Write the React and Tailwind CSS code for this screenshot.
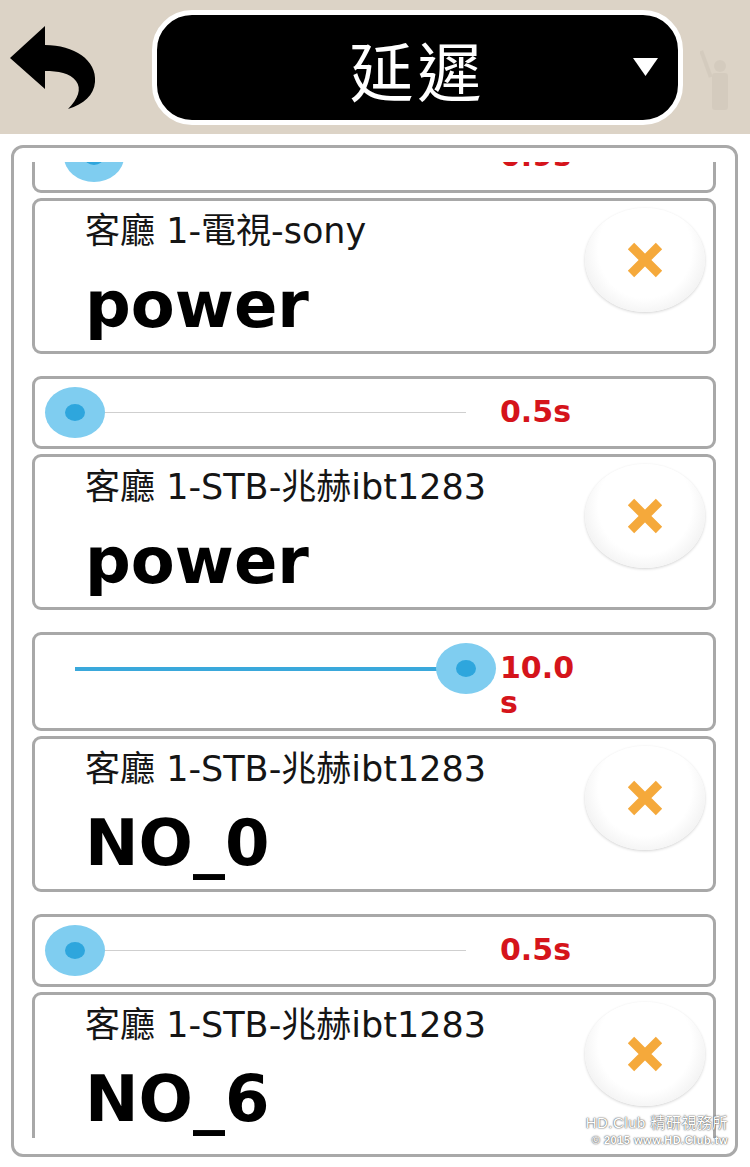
import React from "react";

function BackArrow() {
  return (
    <svg width="100" height="120" viewBox="0 0 100 120" className="block">
      <path
        d="M10 58 L45 26 L45 45 C74 45 97 60 95 82 C94 95 84 104 68 109 C78 99 82 89 76 81 C70 73 58 71 45 71 L45 89 Z"
        fill="#000"
      />
    </svg>
  );
}

function Slider({ thumb, label }) {
  return (
    <div className="border-[3px] border-[#a8a8a8] rounded-[9px] bg-white flex items-start pl-[10px] py-[8px]">
      <div className="relative w-[451px] h-[51px] shrink-0">
        <div className="absolute left-[30px] right-[30px] top-[25px] h-px bg-[#cfcfcf]" />
        <div
          className="absolute left-[30px] top-[24px] h-[4px] bg-[#3aa8db]"
          style={{ width: thumb - 30 }}
        />
        <div
          className="absolute top-0 w-[60px] h-[51px] rounded-[50%] bg-[#7fcdf0] flex items-center justify-center"
          style={{ left: thumb - 30 }}
        >
          <div className="w-[20px] h-[17px] rounded-[50%] bg-[#2ea6dd]" />
        </div>
      </div>
      <div className="ml-[4px] mt-[7px] w-[80px] break-all text-[30px] leading-[35px] font-bold text-[#d5141b] font-['DejaVu_Sans',sans-serif]">
        {label}
      </div>
    </div>
  );
}

function Command({ sub, cmd }) {
  return (
    <div className="border-[3px] border-[#a8a8a8] rounded-[9px] bg-white flex items-start">
      <div className="flex-1 pl-[50px] pt-[10px] pb-[14px]">
        <div className="text-[35px] leading-[40px] text-[#151515] whitespace-nowrap font-['DejaVu_Sans','Noto_Sans_CJK_TC',sans-serif]">
          {sub}
        </div>
        <div className="mt-[22px] text-[64px] leading-[64px] font-bold text-black font-['DejaVu_Sans',sans-serif]">
          {cmd}
        </div>
      </div>
      <div className="mt-[7px] mr-[8px] w-[120px] h-[104px] shrink-0 rounded-[50%] bg-[radial-gradient(ellipse_at_50%_40%,#ffffff_55%,#e4e4e4_100%)] shadow-[0_1px_3px_rgba(0,0,0,0.18)] flex items-center justify-center">
        <svg width="38" height="36" viewBox="0 0 38 36">
          <path d="M5 4 L33 32 M33 4 L5 32" stroke="#f5a93b" strokeWidth="9" fill="none" />
        </svg>
      </div>
    </div>
  );
}

function Row({ thumb, label, sub, cmd }) {
  return (
    <div className="flex flex-col gap-[5px]">
      <Slider thumb={thumb} label={label} />
      <Command sub={sub} cmd={cmd} />
    </div>
  );
}

export default function App() {
  const rows = [
    { thumb: 49, label: "0.9s", sub: "客廳 1-電視-sony", cmd: "power" },
    { thumb: 30, label: "0.5s", sub: "客廳 1-STB-兆赫ibt1283", cmd: "power" },
    { thumb: 421, label: "10.0s", sub: "客廳 1-STB-兆赫ibt1283", cmd: "NO_0" },
    { thumb: 30, label: "0.5s", sub: "客廳 1-STB-兆赫ibt1283", cmd: "NO_6" },
  ];
  return (
    <div className="relative w-[750px] h-[1167px] bg-white overflow-hidden">
      <header className="h-[134px] bg-[#dcd3c6] flex items-start">
        <div className="w-[152px] h-full relative">
          <BackArrow />
        </div>
        <div className="relative mt-[10px] w-[531px] h-[115px] rounded-[40px] border-[5px] border-white bg-black flex items-center justify-center">
          <span className="text-white text-[64px] leading-none tracking-[4px] font-['Noto_Sans_CJK_TC',sans-serif]">
            延遲
          </span>
          <svg
            width="25"
            height="18"
            viewBox="0 0 25 18"
            className="absolute right-[20px] top-[43px]"
          >
            <polygon points="0,0 25,0 12.5,18" fill="#fff" />
          </svg>
        </div>
        <div className="flex-1 h-full flex items-end justify-center pb-[24px]">
          <svg width="34" height="66" viewBox="0 0 34 66" className="opacity-20">
            <circle cx="20" cy="22" r="6" fill="#b9b0a3" />
            <rect x="12" y="29" width="16" height="37" rx="3" fill="#b9b0a3" />
            <rect x="4" y="6" width="4" height="28" fill="#b9b0a3" transform="rotate(-20 6 20)" />
          </svg>
        </div>
      </header>

      <div className="ml-[11px] mt-[11px] w-[727px] h-[1012px] border-[3px] border-[#a9a9a9] rounded-[12px] pt-[14px] pb-[16px] pl-[18px] pr-[19px]">
        <div className="h-[976px] overflow-hidden">
          <div className="mt-[-42px] flex flex-col gap-[22px]">
            {rows.map((r, i) => (
              <Row key={i} {...r} />
            ))}
          </div>
        </div>
      </div>

      <div className="absolute right-[22px] bottom-[20px] text-right text-white font-['Liberation_Sans','Noto_Sans_CJK_TC',sans-serif] [text-shadow:0_0_2px_#555,0_0_1px_#555]">
        <div className="text-[15px] leading-[20px] tracking-[0.5px]">HD.Club 精研視務所</div>
        <div className="text-[11px] leading-[14px] font-bold tracking-[0.5px]">© 2015 www.HD.Club.tw</div>
      </div>
    </div>
  );
}
